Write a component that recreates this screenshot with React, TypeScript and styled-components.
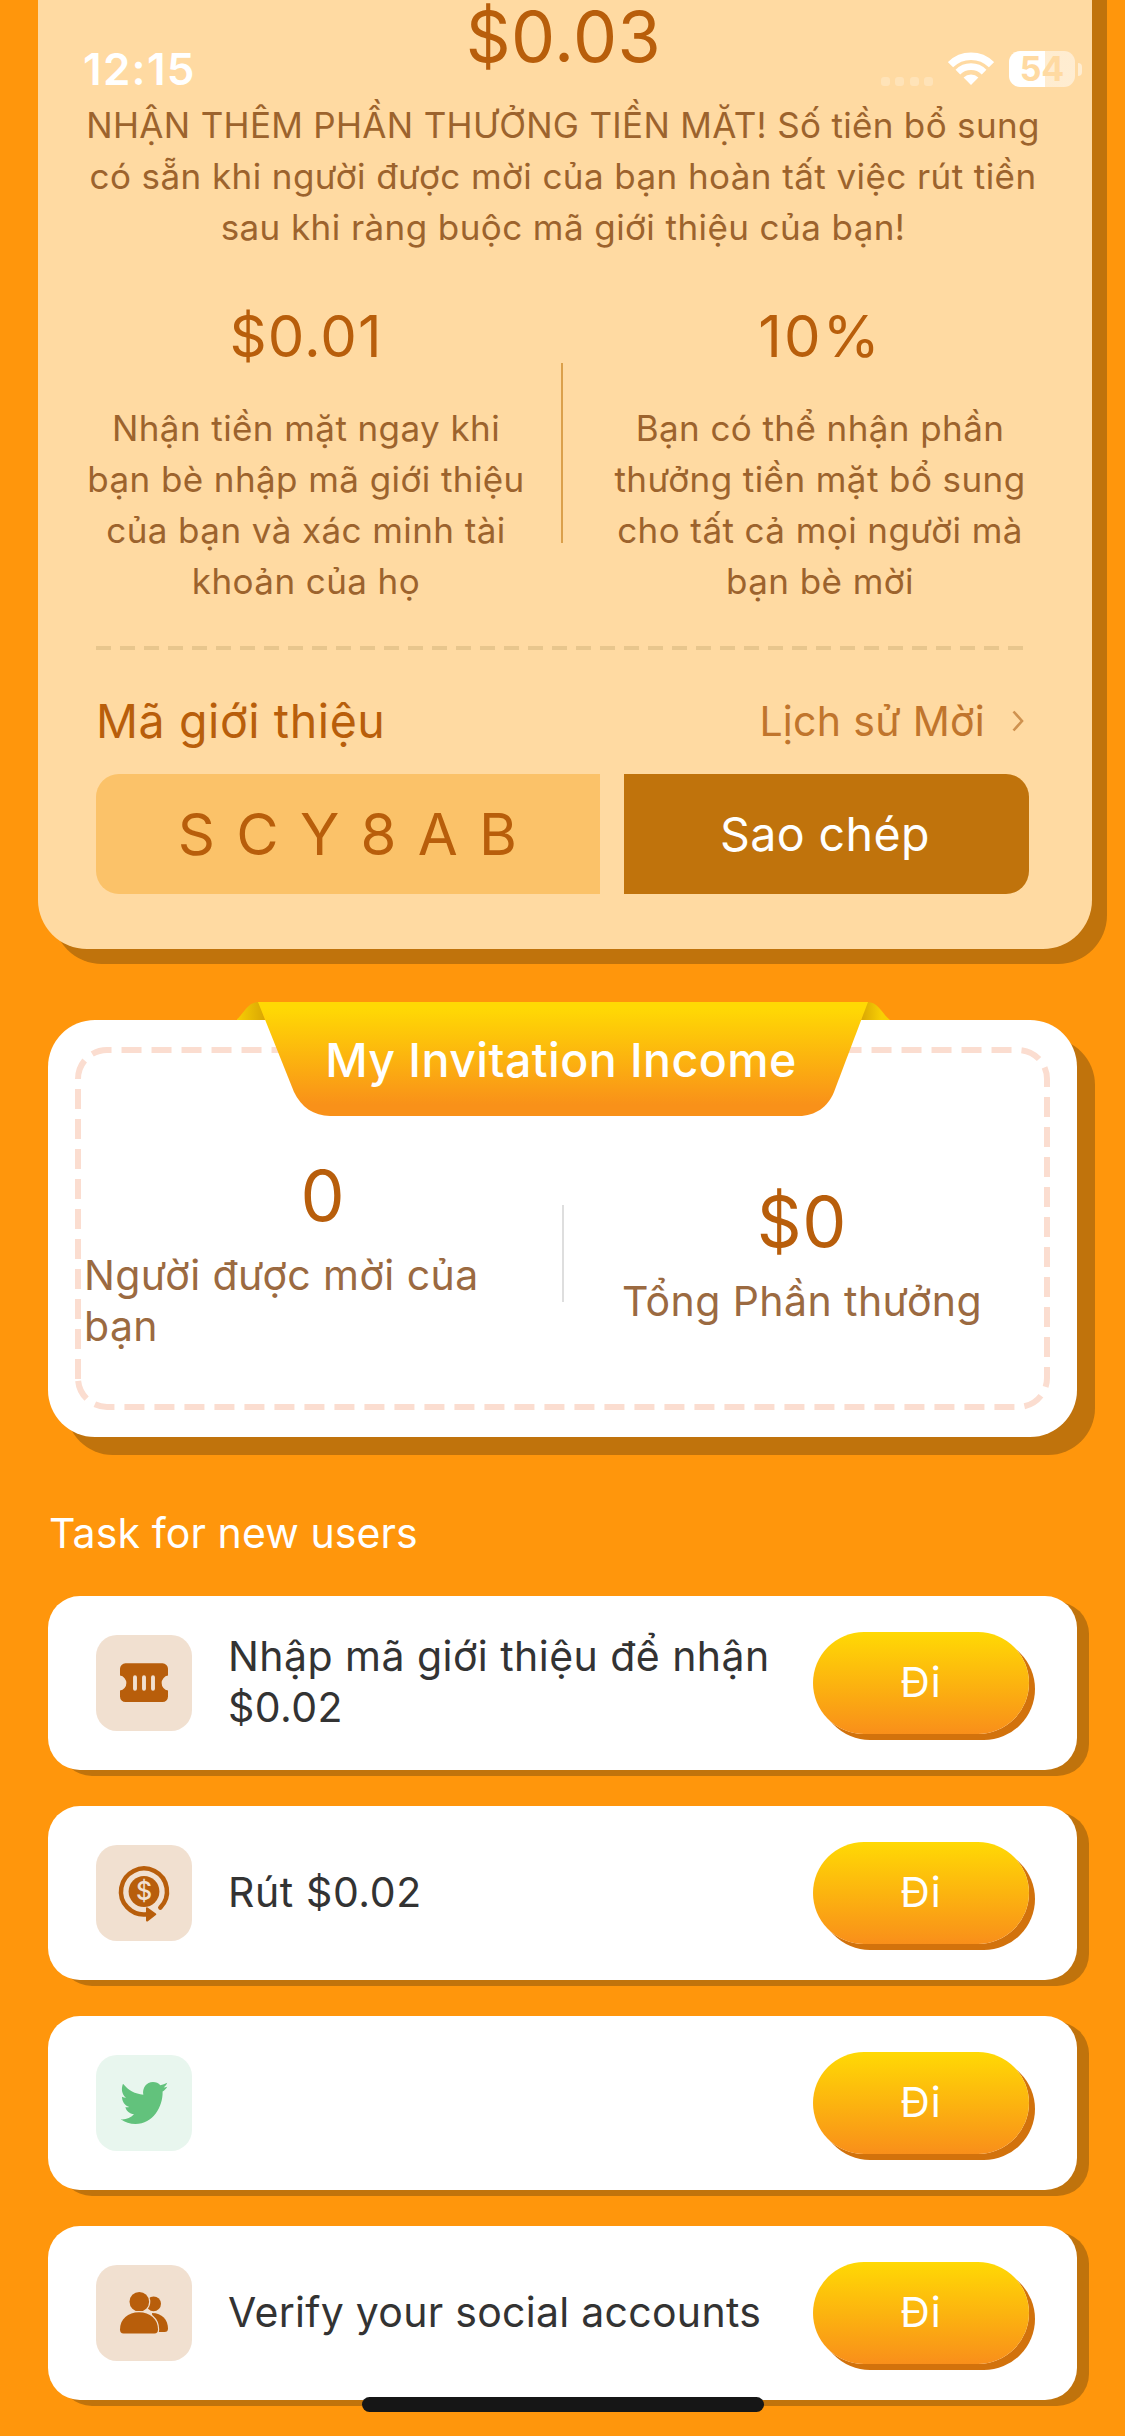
import React from 'react';
import styled, { createGlobalStyle } from 'styled-components';

const color = {
  page: '#ff960c',
  shade: '#c0730c',
  cream: '#ffdaa2',
  amber: '#fbc269',
  rust: '#b85e0b',
  brown: '#9c632d',
  ink: '#333333',
  tile: '#f1e0d0',
  mint: '#e8f6ee',
  green: '#62c27c',
};

const GlobalStyle = createGlobalStyle`
  * { box-sizing: border-box; }
  body {
    margin: 0;
    background: ${color.page};
    font-family: Inter, Roboto, "Liberation Sans", sans-serif;
    font-kerning: normal;
  }
  svg { display: block; }
`;

const Page = styled.main`
  position: relative;
  width: 1125px;
  height: 2436px;
  overflow: hidden;
  background: ${color.page};
`;

const Content = styled.div`
  display: flow-root;
`;

/* ---------- status bar ---------- */

const StatusBar = styled.div`
  position: absolute;
  z-index: 2;
  top: 42px;
  left: 0;
  width: 1125px;
  height: 54px;
  padding: 0 43px 0 83px;
  display: flex;
  align-items: center;
  color: #fff;
`;

const Clock = styled.span`
  flex: 1;
  font-size: 44px;
  font-weight: 600;
  line-height: 54px;
  letter-spacing: 1.3px;
`;

const SignalDots = styled.span`
  display: flex;
  gap: 5.5px;
  margin: 24px 15px 0 0;
  i {
    width: 9px;
    height: 9px;
    border-radius: 3px;
    background: rgba(255, 255, 255, 0.24);
  }
`;

const Battery = styled.span`
  display: flex;
  align-items: center;
  gap: 3px;
  margin-left: 15px;
`;

const BatteryBody = styled.span`
  width: 66px;
  height: 36px;
  border-radius: 11px;
  background: linear-gradient(90deg, #fff 36px, rgba(255, 255, 255, 0.5) 36px);
  color: ${color.cream};
  font-size: 34px;
  font-weight: 700;
  line-height: 36px;
  text-align: center;
`;

const BatteryTip = styled.span`
  width: 4px;
  height: 13px;
  border-radius: 0 4px 4px 0;
  background: rgba(255, 255, 255, 0.5);
`;

/* ---------- reward card ---------- */

const RewardCard = styled.section`
  width: 1054px;
  height: 1009px;
  margin: -60px 0 0 38px;
  padding: 62px 17px 0 10px;
  border-radius: 0 0 49px 49px;
  background: ${color.cream};
  box-shadow: 15px 15px 0 ${color.shade};
  color: ${color.rust};
`;

const Total = styled.div`
  padding-left: 4px;
  text-align: center;
  font-size: 70px;
  line-height: 70px;
  letter-spacing: 0.5px;
`;

const Intro = styled.p`
  margin: 28px 0 0;
  padding-left: 3px;
  text-align: center;
  color: ${color.brown};
  font-size: 35px;
  line-height: 51px;
  letter-spacing: 0.42px;
`;

const IntroLead = styled.span`
  letter-spacing: 0.32px;
`;

const Shares = styled.div`
  display: grid;
  grid-template-columns: 513px 1px 513px;
  margin-top: 48px;
`;

const Share = styled.div`
  padding-left: 3px;
  text-align: center;
  p {
    margin: 32px 0 0;
    color: ${color.brown};
    font-size: 35px;
    line-height: 51px;
    letter-spacing: 0.42px;
  }
`;

const ShareValue = styled.div<{ $track: number }>`
  font-size: 58px;
  line-height: 70px;
  letter-spacing: ${(p) => p.$track}px;
`;

const ShareDivider = styled.span`
  height: 180px;
  margin-top: 62px;
  width: 2px;
  background: #dba04b;
`;

const DashedRule = styled.div`
  height: 4px;
  width: 928px;
  margin: 39px 0 0 48px;
  background: repeating-linear-gradient(90deg, #e8c68d 0 15px, transparent 15px 24px);
`;

const CodeHeader = styled.div`
  display: flex;
  align-items: center;
  height: 60px;
  margin: 41px 51px 0 48px;
`;

const CodeLabel = styled.span`
  flex: 1;
  font-size: 46.5px;
  line-height: 60px;
  letter-spacing: 0.6px;
`;

const HistoryLink = styled.a`
  display: flex;
  align-items: center;
  gap: 27px;
  color: #c0752d;
  font-size: 41px;
  line-height: 60px;
  letter-spacing: 0.3px;
`;

const CodeRow = styled.div`
  display: flex;
  gap: 24px;
  margin: 23px 0 0 48px;
  line-height: 120px;
  text-align: center;
`;

const Code = styled.div`
  width: 504px;
  height: 120px;
  padding-left: 20px;
  border-radius: 23px 0 0 23px;
  background: ${color.amber};
  font-size: 58px;
  letter-spacing: 21.3px;
`;

const CopyButton = styled.div`
  width: 405px;
  height: 120px;
  padding-right: 3px;
  border-radius: 0 23px 23px 0;
  background: ${color.shade};
  color: #fff;
  font-size: 46.5px;
  letter-spacing: 0.42px;
`;

/* ---------- income card ---------- */

const IncomeCard = styled.section`
  position: relative;
  display: flex;
  align-items: center;
  width: 1029px;
  height: 417px;
  margin: 71px 0 0 48px;
  padding: 49px 34px 0 36px;
  border-radius: 47px;
  background: #fff;
  box-shadow: 18px 18px 0 ${color.shade};
`;

const Stitching = styled.svg`
  position: absolute;
  top: 0;
  left: 0;
`;

const Ribbon = styled.div`
  position: absolute;
  top: -18px;
  left: 189px;
  width: 653px;
  height: 114px;
`;

const RibbonShape = styled.svg`
  position: absolute;
  inset: 0;
`;

const RibbonTitle = styled.h2`
  position: relative;
  margin: 0;
  padding: 28px 5px 0 0;
  text-align: center;
  color: #fff;
  font-size: 46.5px;
  font-weight: 500;
  line-height: 60px;
  letter-spacing: 0.44px;
`;

const Figure = styled.div`
  position: relative;
  display: flex;
  flex-direction: column;
  align-items: center;
  gap: 12px;
  width: 478px;
`;

const FigureValue = styled.span`
  color: ${color.rust};
  font-size: 70px;
  line-height: 84px;
  letter-spacing: 0.6px;
`;

const FigureLabel = styled.span`
  color: #9b6a41;
  font-size: 41px;
  line-height: 51px;
  letter-spacing: 0.42px;
`;

const FigureDivider = styled.span`
  width: 2px;
  height: 97px;
  margin-right: -1px;
  background: #dedede;
`;

/* ---------- tasks ---------- */

const TasksTitle = styled.h3`
  margin: 71px 0 37px 49px;
  color: #fff;
  font-size: 41px;
  font-weight: 400;
  line-height: 51px;
  letter-spacing: 0.1px;
`;

const TaskList = styled.div`
  display: flex;
  flex-direction: column;
  gap: 36px;
  margin-left: 48px;
`;

const TaskCard = styled.article`
  display: flex;
  align-items: center;
  width: 1029px;
  height: 174px;
  padding: 0 48px;
  border-radius: 32px;
  background: #fff;
  box-shadow: 12px 6px 0 ${color.shade};
`;

const IconTile = styled.span<{ $bg: string }>`
  flex: none;
  width: 96px;
  height: 96px;
  border-radius: 21px;
  background: ${(p) => p.$bg};
`;

const TaskText = styled.span<{ $track: number }>`
  flex: 1;
  padding: 0 18px 2px 36px;
  color: ${color.ink};
  font-size: 41px;
  line-height: 51px;
  letter-spacing: ${(p) => p.$track}px;
`;

const GoButton = styled.span`
  flex: none;
  width: 216px;
  height: 102px;
  padding-bottom: 2px;
  border-radius: 51px;
  background: linear-gradient(180deg, #ffd904, #f98f1a);
  box-shadow: 6px 6px 0 #d2720c;
  color: #fff;
  font-size: 41px;
  line-height: 100px;
  letter-spacing: 1px;
  text-align: center;
`;

const HomeIndicator = styled.div`
  position: absolute;
  left: 362px;
  bottom: 24px;
  width: 402px;
  height: 15px;
  border-radius: 8px;
  background: #161616;
`;

/* ---------- drawings ---------- */

const WifiIcon = () => (
  <svg width="46" height="36" viewBox="0 0 46 36" fill="none" stroke="#fff">
    <path d="M2.5 13.7A29 29 0 0 1 43.5 13.7" strokeWidth="7.4" />
    <path d="M9.9 21.1A18.5 18.5 0 0 1 36.1 21.1" strokeWidth="6.6" />
    <path d="M23 34L15.6 26.4A10.6 10.6 0 0 1 30.4 26.4Z" fill="#fff" stroke="none" />
  </svg>
);

const ChevronIcon = () => (
  <svg width="12" height="22" viewBox="0 0 12 22" fill="none" stroke="#cf9250" strokeWidth="2.6">
    <path d="M1.5 1.5L10 11L1.5 20.5" />
  </svg>
);

const TicketIcon = () => (
  <svg width="96" height="96" viewBox="0 0 96 96">
    <path
      fill={color.rust}
      d="M29.5 28.3H66.5a5.5 5.5 0 0 1 5.500 5.500V40.600a7.600 7.600 0 0 0 0 15V61.500a5.500 5.500 0 0 1-5.500 5.500H29.500a5.500 5.500 0 0 1-5.500-5.500V55.600a7.600 7.600 0 0 0 0-15V33.800a5.500 5.500 0 0 1 5.500-5.500Z"
    />
    <path d="M39 42.300V53.700M48 42.300V53.700M57 42.300V53.700" stroke={color.tile} strokeWidth="3.900" strokeLinecap="round" />
  </svg>
);

const WithdrawIcon = () => (
  <svg width="96" height="96" viewBox="0 0 96 96">
    <circle cx="48" cy="46.500" r="15.400" fill={color.rust} />
    <path
      d="M64.300 62.700A23 23 0 1 0 51 69.300"
      fill="none"
      stroke={color.rust}
      strokeWidth="4.500"
      strokeLinecap="round"
    />
    <path d="M51 63.200V75.600L59.300 69.300Z" fill={color.rust} stroke={color.rust} strokeWidth="2" strokeLinejoin="round" />
    <text x="48" y="55.400" textAnchor="middle" fontSize="25" fontWeight="500" fill={color.tile}>
      $
    </text>
  </svg>
);

const BirdIcon = () => (
  <svg width="96" height="96" viewBox="0 0 96 96">
    <path
      fill={color.green}
      d="M24.700 64.300C30 64.800 34.500 62.800 38 59.200C33.500 58.700 30.500 56 29.300 52.200C30.700 52.400 32.200 52.300 33.200 52C28.500 50.500 26 46 26 41.700C27.300 42.400 28.600 42.700 30 42.800C26 39.800 24.800 34 27 28.800C32.500 35.500 39 39 47.300 39.700C46 33 50.500 27 57 27C60 27 62.500 28.200 64.300 30.200C66.800 29.800 69 29 71.200 27.800C70.500 30.200 69 31.500 67.700 32.400C69 32.300 70 32 71.300 31.700C70 33.800 68.300 35.300 66.600 36.600C67 52 57 69 39.500 69C34 69 29 67.500 24.700 64.300Z"
    />
  </svg>
);

const PeopleIcon = () => (
  <svg width="96" height="96" viewBox="0 0 96 96" fill={color.rust}>
    <circle cx="57.600" cy="38.800" r="7.400" />
    <path d="M56 48C66 48 72 55 72 63.500Q72 67 68.500 67H58Z" />
    <g stroke={color.tile} strokeWidth="2.400" paintOrder="stroke">
      <circle cx="43.300" cy="36.700" r="9.800" />
      <path d="M24 64.500C24 54 32 47.300 43 47.300S62 54 62 64.500Q62 68.400 58.500 68.400H27.500Q24 68.400 24 64.500Z" />
    </g>
  </svg>
);

const tasks = [
  { icon: <TicketIcon />, bg: color.tile, text: 'Nhập mã giới thiệu để nhận $0.02', track: 0.46 },
  { icon: <WithdrawIcon />, bg: color.tile, text: 'Rút $0.02', track: 0.6 },
  { icon: <BirdIcon />, bg: color.mint, text: '', track: 0 },
  { icon: <PeopleIcon />, bg: color.tile, text: 'Verify your social accounts', track: 0.28 },
];

export default function App() {
  return (
    <>
      <GlobalStyle />
      <Page>
        <StatusBar>
          <Clock>12:15</Clock>
          <SignalDots>
            <i />
            <i />
            <i />
            <i />
          </SignalDots>
          <WifiIcon />
          <Battery>
            <BatteryBody>54</BatteryBody>
            <BatteryTip />
          </Battery>
        </StatusBar>

        <Content>
          <RewardCard>
            <Total>$0.03</Total>
            <Intro>
              <IntroLead>NHẬN THÊM PHẦN THƯỞNG TIỀN MẶT! Số tiền bổ sung</IntroLead>
              <br />
              có sẵn khi người được mời của bạn hoàn tất việc rút tiền
              <br />
              sau khi ràng buộc mã giới thiệu của bạn!
            </Intro>
            <Shares>
              <Share>
                <ShareValue $track={1.1}>$0.01</ShareValue>
                <p>
                  Nhận tiền mặt ngay khi
                  <br />
                  bạn bè nhập mã giới thiệu
                  <br />
                  của bạn và xác minh tài
                  <br />
                  khoản của họ
                </p>
              </Share>
              <ShareDivider />
              <Share>
                <ShareValue $track={2.2}>10%</ShareValue>
                <p>
                  Bạn có thể nhận phần
                  <br />
                  thưởng tiền mặt bổ sung
                  <br />
                  cho tất cả mọi người mà
                  <br />
                  bạn bè mời
                </p>
              </Share>
            </Shares>
            <DashedRule />
            <CodeHeader>
              <CodeLabel>Mã giới thiệu</CodeLabel>
              <HistoryLink>
                Lịch sử Mời
                <ChevronIcon />
              </HistoryLink>
            </CodeHeader>
            <CodeRow>
              <Code>SCY8AB</Code>
              <CopyButton>Sao chép</CopyButton>
            </CodeRow>
          </RewardCard>

          <IncomeCard>
            <Stitching width="1029" height="417" viewBox="0 0 1029 417" fill="none">
              <path
                d="M30 359V59A29 29 0 0 1 59 30H970A29 29 0 0 1 999 59V358A29 29 0 0 1 970 387H59A29 29 0 0 1 30 358"
                stroke="#fbddd0"
                strokeWidth="6"
                strokeDasharray="20 10"
              />
            </Stitching>
            <Ribbon>
              <RibbonShape width="653" height="114" viewBox="0 0 653 114">
                <defs>
                  <linearGradient id="ribbon" x1="0" y1="0" x2="0" y2="1">
                    <stop offset="0.05" stopColor="#ffd904" />
                    <stop offset="0.9" stopColor="#f99119" />
                  </linearGradient>
                  <linearGradient id="foldLeft" x1="0" y1="0" x2="1" y2="0">
                    <stop offset="0" stopColor="#f8cf04" />
                    <stop offset="1" stopColor="#d9a604" />
                  </linearGradient>
                  <linearGradient id="foldRight" x1="0" y1="0" x2="1" y2="0">
                    <stop offset="0" stopColor="#d9a604" />
                    <stop offset="0.7" stopColor="#f8cf04" />
                  </linearGradient>
                </defs>
                <path d="M-1 18C7 12 10 0 22 0L28 18Z" fill="url(#foldLeft)" />
                <path d="M630 0C642 0 645 12 653 18H624Z" fill="url(#foldRight)" />
                <path
                  d="M21 0H631L597 90C591 105 578 114 562 114H93C77 114 64 105 57 90Z"
                  fill="url(#ribbon)"
                />
              </RibbonShape>
              <RibbonTitle>My Invitation Income</RibbonTitle>
            </Ribbon>
            <Figure>
              <FigureValue>0</FigureValue>
              <FigureLabel>Người được mời của bạn</FigureLabel>
            </Figure>
            <FigureDivider />
            <Figure>
              <FigureValue>$0</FigureValue>
              <FigureLabel>Tổng Phần thưởng</FigureLabel>
            </Figure>
          </IncomeCard>

          <TasksTitle>Task for new users</TasksTitle>
          <TaskList>
            {tasks.map((task, i) => (
              <TaskCard key={i}>
                <IconTile $bg={task.bg}>{task.icon}</IconTile>
                <TaskText $track={task.track}>{task.text}</TaskText>
                <GoButton>Đi</GoButton>
              </TaskCard>
            ))}
          </TaskList>
        </Content>

        <HomeIndicator />
      </Page>
    </>
  );
}
